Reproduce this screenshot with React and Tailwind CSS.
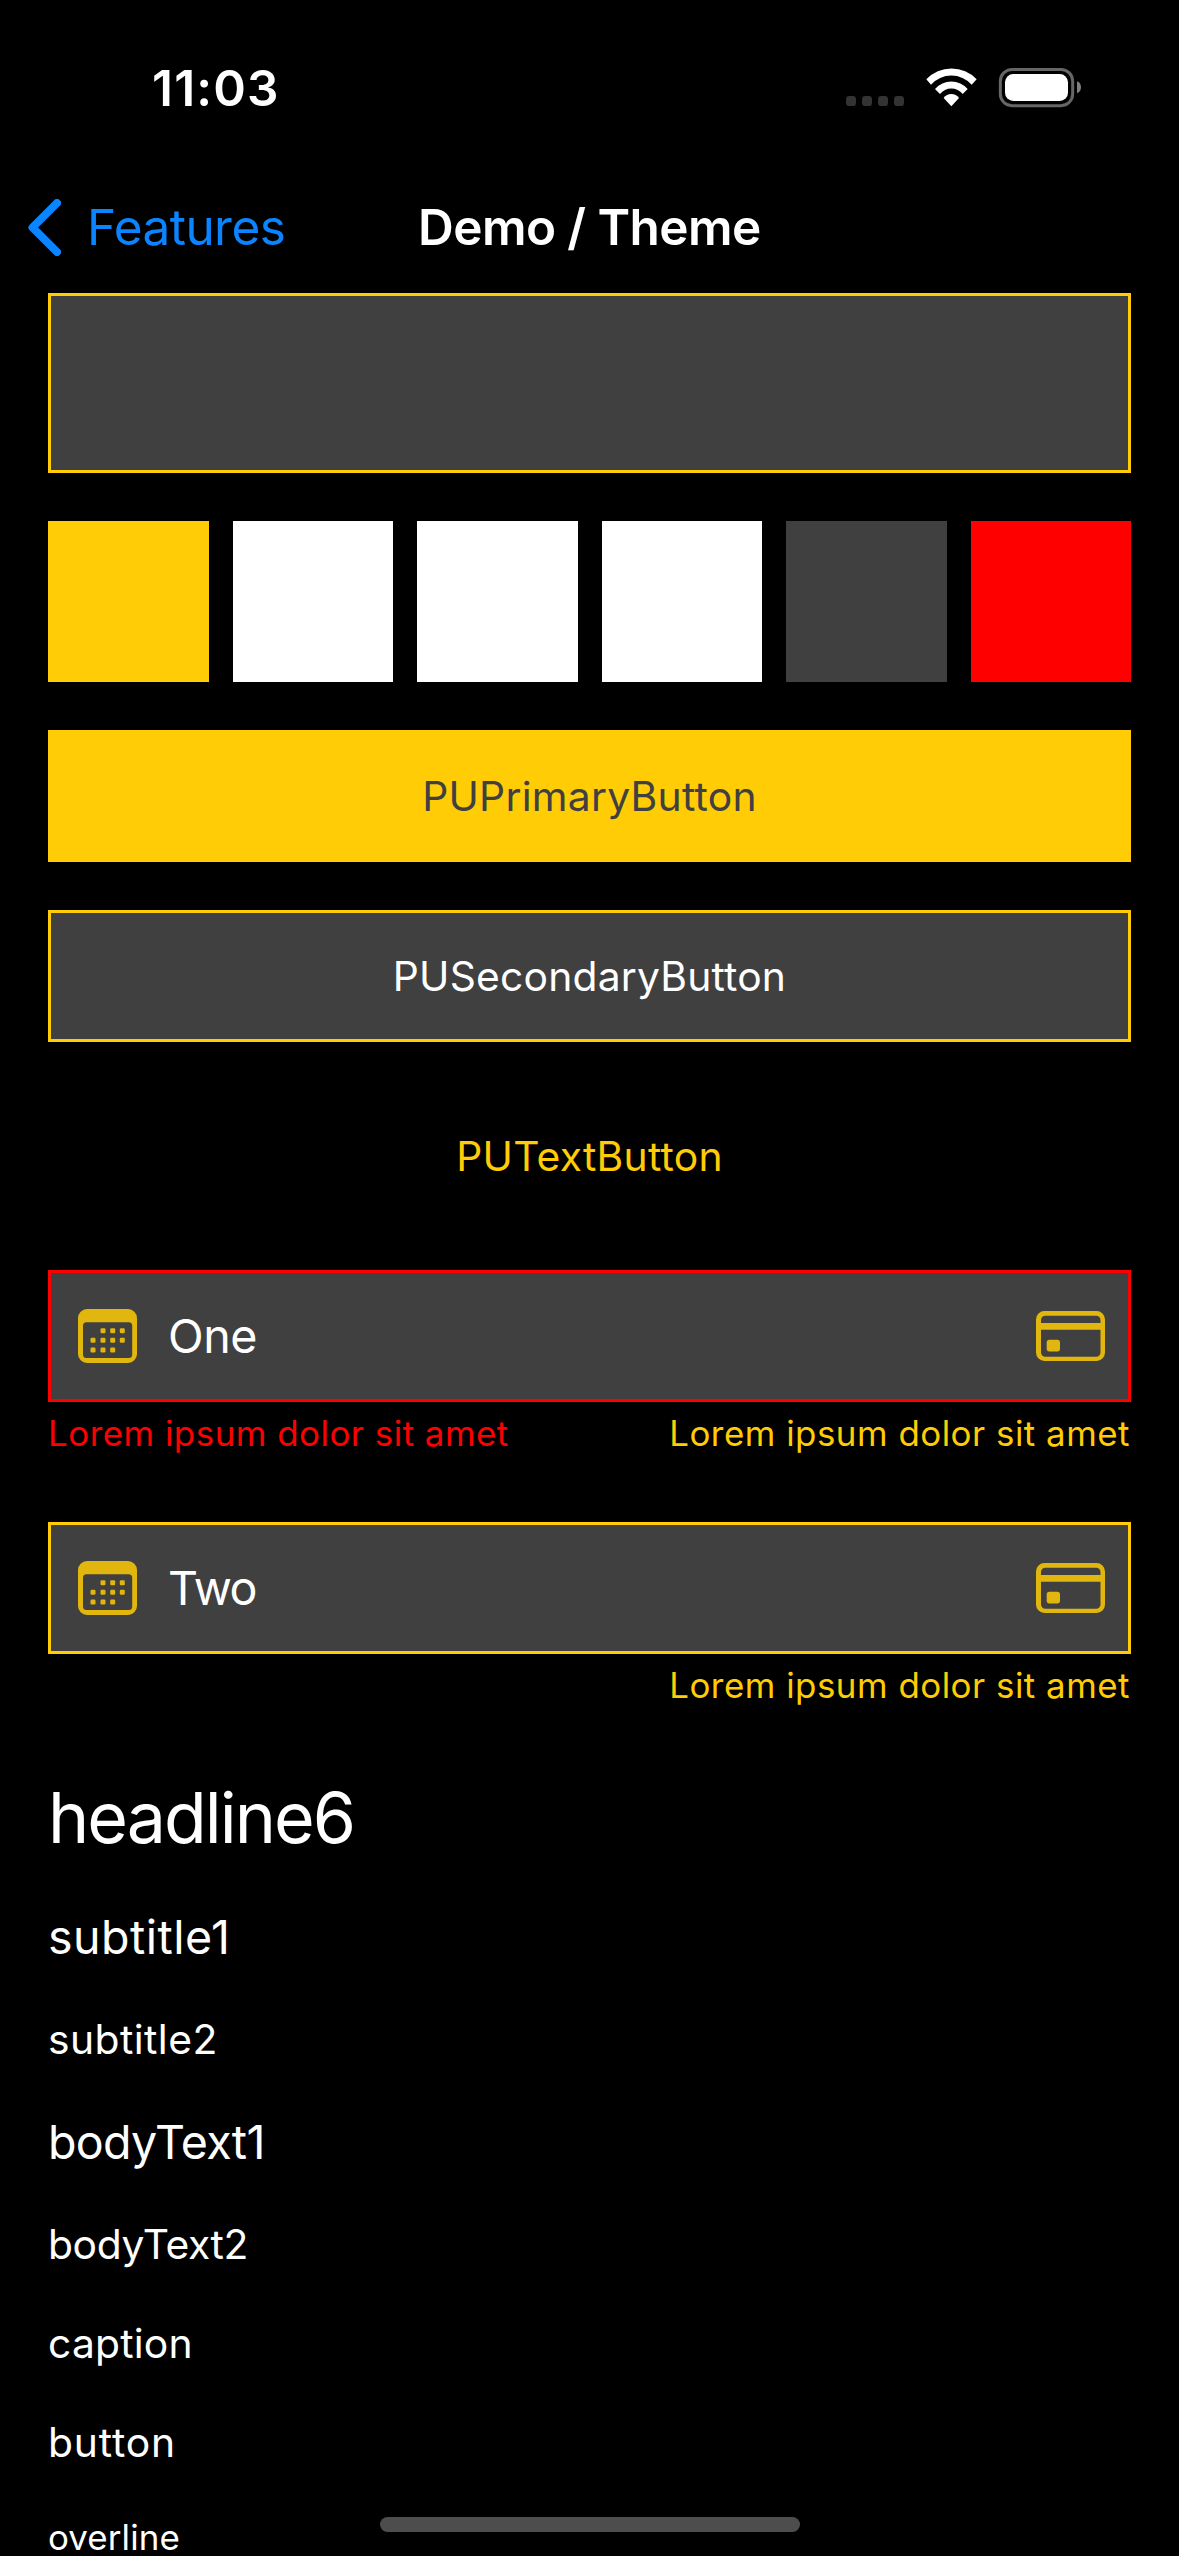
const SWATCHES = [
  "bg-[#ffcc05]",
  "bg-white",
  "bg-white",
  "bg-white",
  "bg-[#404040]",
  "bg-[#ff0000]",
];

const TYPE_SAMPLES = [
  { text: "headline6", style: "text-[69.8px] leading-[87px] tracking-[-1.95px]" },
  { text: "subtitle1", style: "text-[46.6px] leading-[56px] tracking-[0.46px]" },
  { text: "subtitle2", style: "text-[40.8px] leading-[52px] tracking-[0.44px]" },
  { text: "bodyText1", style: "text-[46.6px] leading-[58px] tracking-[-0.7px]" },
  { text: "bodyText2", style: "text-[40.8px] leading-[50px] tracking-[-0.38px]" },
  { text: "caption", style: "text-[40.8px] leading-[52px] tracking-[0.2px]" },
  { text: "button", style: "text-[40.8px] leading-[50px] tracking-[0.85px]" },
  { text: "overline", style: "mt-[3px] text-[34.9px] leading-[38px] tracking-[0.1px]" },
];

function StatusIcons() {
  return (
    <svg className="h-[40px] w-[236px]" viewBox="78 84 708 120" fill="none">
      {[78, 126, 174, 222].map((x) => (
        <rect key={x} x={x} y="168" width="30" height="30" rx="10" fill="#333333" />
      ))}
      <g fill="#ffffff">
        <path d="M319 118A104 104 0 0 1 470 118L455 134A82 82 0 0 0 333 134Z" />
        <path d="M345 147A65 65 0 0 1 443 147L428 162A43 43 0 0 0 360 162Z" />
        <path d="M371 174A28 28 0 0 1 417 174L394 199Z" />
      </g>
      <rect x="541" y="88.500" width="217" height="108.500" rx="35" stroke="#666666" strokeWidth="9" />
      <rect x="555" y="102" width="189" height="81" rx="25" fill="#ffffff" />
      <path d="M771 124C779 127 783 134 783 142C783 150 779 157 771 160Z" fill="#808080" />
    </svg>
  );
}

function BackChevron() {
  return (
    <svg className="h-[57px] w-[33px]" viewBox="0 0 33 57" fill="none">
      <path
        d="M29 4L4.500 28.500L29 53"
        stroke="#0a84ff"
        strokeWidth="8"
        strokeLinecap="round"
        strokeLinejoin="round"
      />
    </svg>
  );
}

function CalendarIcon() {
  const dots = [
    [25, 21.7], [34.7, 21.7], [44.3, 21.7],
    [15, 31.3], [25, 31.3], [34.7, 31.3], [44.3, 31.3],
    [15, 41], [25, 41], [34.7, 41],
  ];
  return (
    <svg className="h-[54px] w-[59px]" viewBox="0 0 59 54" fill="#e1b60e">
      <path
        fillRule="evenodd"
        d="M9 0H50A9 9 0 0 1 59 9V45A9 9 0 0 1 50 54H9A9 9 0 0 1 0 45V9A9 9 0 0 1 9 0ZM8.500 13.300A3.500 3.500 0 0 0 5 16.800V45.500A3.500 3.500 0 0 0 8.500 49H50.700A3.500 3.500 0 0 0 54.200 45.500V16.800A3.500 3.500 0 0 0 50.700 13.300Z"
      />
      {dots.map(([x, y]) => (
        <rect key={`${x}-${y}`} x={x - 2.5} y={y - 2.5} width="5" height="5" rx="1.200" />
      ))}
    </svg>
  );
}

function CardIcon() {
  return (
    <svg className="h-[50px] w-[69px]" viewBox="0 0 69 50" fill="#e1b60e">
      <path
        fillRule="evenodd"
        d="M8.500 0H60.500A8.500 8.500 0 0 1 69 8.500V41.500A8.500 8.500 0 0 1 60.500 50H8.500A8.500 8.500 0 0 1 0 41.500V8.500A8.500 8.500 0 0 1 8.500 0ZM9.200 4.700A4.200 4.200 0 0 0 5 8.900V12H64.500V8.900A4.200 4.200 0 0 0 60.300 4.700ZM5 18.700V41.500A4.200 4.200 0 0 0 9.200 45.700H60.300A4.200 4.200 0 0 0 64.500 41.500V18.700Z"
      />
      <rect x="10.700" y="28.700" width="13.300" height="11.700" rx="2.700" />
    </svg>
  );
}

function Field({ value, valueStyle, border, error, helper }) {
  return (
    <div>
      <div className={`flex h-[132px] items-center border-[3px] bg-[#404040] pl-[27px] pr-[23px] ${border}`}>
        <CalendarIcon />
        <span className={`ml-[31px] flex-1 text-[46.6px] leading-[56px] text-white ${valueStyle}`}>{value}</span>
        <CardIcon />
      </div>
      <div className="flex h-[72px] justify-between text-[34.9px] leading-[62px] tracking-[0.5px]">
        <span className="text-[#ff0000]">{error}</span>
        <span className="pr-px text-[#ffcc05]">{helper}</span>
      </div>
    </div>
  );
}

export default function App() {
  return (
    <div className="relative h-[2556px] w-[1179px] overflow-hidden bg-black font-['Inter',sans-serif] text-white">
      <div className="flex h-[176px] items-center justify-between pl-[152px] pr-[97px]">
        <span className="text-[49.5px] font-semibold leading-[60px] tracking-[1.2px]">11:03</span>
        <StatusIcons />
      </div>

      <header className="flex h-[102px] items-center">
        <button className="flex w-[418px] items-center gap-[26px] pl-7 text-[49.5px] leading-[60px] tracking-[-0.55px] text-[#0a84ff]">
          <BackChevron />
          Features
        </button>
        <h1 className="text-[49.5px] font-semibold leading-[60px] tracking-[-0.57px]">Demo / Theme</h1>
      </header>

      <main className="flex flex-col gap-12 px-12 pt-[15px]">
        <div className="h-[180px] border-[3px] border-[#ffcc05] bg-[#404040]" />

        <div className="grid h-[161px] grid-cols-6 gap-6">
          {SWATCHES.map((color, i) => (
            <div key={i} className={color} />
          ))}
        </div>

        <button className="h-[132px] bg-[#ffcc05] text-[40.8px] leading-[50px] tracking-[0.26px] text-[#404040]">
          PUPrimaryButton
        </button>
        <button className="h-[132px] border-[3px] border-[#ffcc05] bg-[#404040] text-[40.8px] leading-[50px] tracking-[0.2px]">
          PUSecondaryButton
        </button>
        <button className="h-[132px] text-[40.8px] leading-[50px] tracking-[0.25px] text-[#ffcc05]">
          PUTextButton
        </button>

        <Field
          value="One"
          valueStyle="tracking-[-0.5px]"
          border="border-[#ff0000]"
          error="Lorem ipsum dolor sit amet"
          helper="Lorem ipsum dolor sit amet"
        />
        <Field
          value="Two"
          valueStyle="tracking-[-1.5px]"
          border="border-[#ffcc05]"
          error=""
          helper="Lorem ipsum dolor sit amet"
        />

        {TYPE_SAMPLES.map(({ text, style }) => (
          <p key={text} className={style}>
            {text}
          </p>
        ))}
      </main>

      <div className="absolute bottom-6 left-[380px] h-[15px] w-[420px] rounded-full bg-[#4d4d4d]" />
    </div>
  );
}
